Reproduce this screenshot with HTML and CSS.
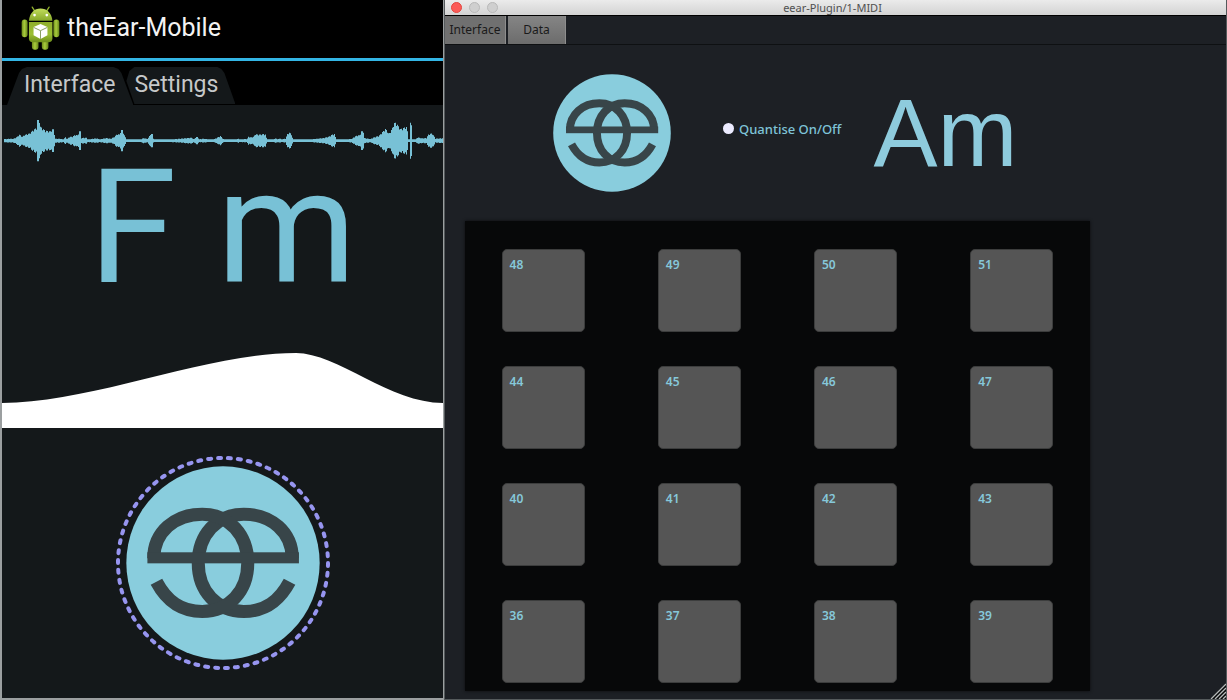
FILE: index.html
```html
<!DOCTYPE html>
<html lang="en">
<head>
<meta charset="utf-8">
<title>theEar</title>
<link rel="stylesheet" href="styles.css">
</head>
<body>
<svg class="defs" aria-hidden="true">
  <symbol id="ear-logo" viewBox="0 0 580 580">
    <circle cx="290" cy="290" r="289" class="logo-disc"/>
    <g class="logo-stroke">
      <g id="ear-half">
        <path d="M497 276C497 198 434 144 352 144C272 144 216 206 216 290C216 374 272 435 352 435C416 435 458 404 489 346"/>
      </g>
      <use href="#ear-half" transform="translate(580 0) scale(-1 1)"/>
    </g>
    <rect x="64" y="258" width="453" height="33" class="logo-bar"/>
  </symbol>
</svg>
<main class="screen">
  <section class="phone">
    <header class="phone-header">
      <svg class="android" viewBox="64 14 118 138" aria-hidden="true">
        <defs>
          <linearGradient id="limb" x1="0" x2="1" y1="0" y2="0">
            <stop offset="0" stop-color="#6d8c1b"/><stop offset=".45" stop-color="#a9cc3d"/><stop offset="1" stop-color="#66851a"/>
          </linearGradient>
          <linearGradient id="torso" x1="0" x2="0" y1="0" y2="1">
            <stop offset="0" stop-color="#8fae2c"/><stop offset=".6" stop-color="#9cbf33"/><stop offset="1" stop-color="#6f8f1c"/>
          </linearGradient>
          <linearGradient id="head" x1="0" x2="0" y1="0" y2="1">
            <stop offset="0" stop-color="#c2dd5c"/><stop offset="1" stop-color="#86a82a"/>
          </linearGradient>
        </defs>
        <path d="M98 20L107 34M149 20L140 34" stroke="#8fae2c" stroke-width="4" stroke-linecap="round"/>
        <path d="M88 61C90 38 104 24 123 24S157 38 159 61Z" fill="url(#head)"/>
        <circle cx="105" cy="44" r="4" fill="#fff"/><circle cx="142" cy="44" r="4" fill="#fff"/>
        <rect x="66" y="57" width="18" height="54" rx="9" fill="url(#limb)"/>
        <rect x="162" y="57" width="18" height="54" rx="9" fill="url(#limb)"/>
        <rect x="97" y="112" width="20" height="37" rx="9" fill="url(#limb)"/>
        <rect x="127" y="112" width="20" height="37" rx="9" fill="url(#limb)"/>
        <path d="M88 65H159V114Q159 126 147 126H100Q88 126 88 114Z" fill="url(#torso)"/>
        <path d="M123 71L144 80V105L123 116L102 105V80Z" fill="#fff"/>
        <path d="M102 81L123 91L144 81M123 91V116" fill="none" stroke="#8a9e62" stroke-width="3"/>
      </svg>
      <h1 class="phone-title">theEar-Mobile</h1>
    </header>
    <nav class="phone-tabs">
      <button class="phone-tab phone-tab-first" type="button">Interface</button>
      <button class="phone-tab phone-tab-second" type="button">Settings</button>
    </nav>
    <svg class="waveform" viewBox="6 0 1323 180" preserveAspectRatio="none" aria-hidden="true">
      <path id="wave"/>
    </svg>
    <p class="phone-chord">F m</p>
    <svg class="hill" viewBox="0 0 441 75" preserveAspectRatio="none" aria-hidden="true">
      <path d="M0 50C90 50 205 0 294 0C335 0 388 50 441 50V75H0Z"/>
    </svg>
    <div class="listen">
      <button class="listen-button" type="button" aria-label="Listen">
        <svg class="listen-ring" viewBox="0 0 214 214" aria-hidden="true">
          <circle cx="107" cy="107" r="105" pathLength="660"/>
        </svg>
        <svg class="listen-logo" aria-hidden="true"><use href="#ear-logo"/></svg>
      </button>
    </div>
  </section>

  <section class="plugin">
    <header class="titlebar">
      <div class="lights">
        <button class="light light-close" type="button" aria-label="Close"></button>
        <button class="light" type="button" aria-label="Minimise"></button>
        <button class="light" type="button" aria-label="Zoom"></button>
      </div>
      <h2 class="window-title">eear-Plugin/1-MIDI</h2>
    </header>
    <nav class="plugin-tabs">
      <button class="plugin-tab plugin-tab-active" type="button">Interface</button>
      <button class="plugin-tab" type="button">Data</button>
    </nav>
    <div class="overview">
      <svg class="plugin-logo" aria-hidden="true"><use href="#ear-logo"/></svg>
      <label class="quantise" for="quantise"><input class="quantise-box" id="quantise" type="checkbox">Quantise On/Off</label>
      <p class="plugin-chord">Am</p>
    </div>
    <div class="pads">
      <button class="pad" type="button">48</button>
      <button class="pad" type="button">49</button>
      <button class="pad" type="button">50</button>
      <button class="pad" type="button">51</button>
      <button class="pad" type="button">44</button>
      <button class="pad" type="button">45</button>
      <button class="pad" type="button">46</button>
      <button class="pad" type="button">47</button>
      <button class="pad" type="button">40</button>
      <button class="pad" type="button">41</button>
      <button class="pad" type="button">42</button>
      <button class="pad" type="button">43</button>
      <button class="pad" type="button">36</button>
      <button class="pad" type="button">37</button>
      <button class="pad" type="button">38</button>
      <button class="pad" type="button">39</button>
    </div>
    <svg class="grip" viewBox="0 0 16 16" aria-hidden="true">
      <path d="M0 16L16 0V16Z" fill="#050607"/>
      <path d="M1 16L16 1M5 16L16 5M9 16L16 9M13 16L16 13" stroke="#b5b8b8" stroke-width="1.4"/>
    </svg>
  </section>
</main>
<script src="waveform.js"></script>
</body>
</html>
```
FILE: styles.css
```css
* {
  box-sizing: border-box;
}

body {
  margin: 0;
  background: #1d2025;
  font-family: "Noto Sans", "Open Sans", sans-serif;
}

button {
  margin: 0;
  padding: 0;
  border: 0;
  background: none;
  color: inherit;
  font: inherit;
}

h1, h2, p {
  margin: 0;
  font-weight: 400;
}

.defs {
  position: absolute;
  width: 0;
  height: 0;
}

.logo-disc {
  fill: #89cddd;
}

.logo-stroke {
  fill: none;
  stroke: #384549;
  stroke-width: 39;
}

.logo-bar {
  fill: #384549;
}

.screen {
  display: grid;
  grid-template-columns: 444fr 783fr;
  min-height: 100vh;
}

/* Mobile app */

.phone {
  display: flex;
  flex-direction: column;
  border: solid #9b9fa0;
  border-width: 0 1px 2px 2px;
  background: #14181a;
  font-family: Roboto, sans-serif;
}

.phone-header {
  display: flex;
  align-items: center;
  gap: 7px;
  height: 61px;
  padding: 0 19px 2px;
  border-bottom: 3px solid #33b5e5;
  background: #000;
}

.android {
  width: 39px;
  height: 46px;
}

.phone-title {
  color: #f3f3f3;
  font-size: 25px;
  line-height: 32px;
}

.phone-tabs {
  display: flex;
  height: 44px;
  padding: 6px 5px 0;
  background: #000;
}

.phone-tab {
  height: 38px;
  padding-bottom: 3px;
  background: #14181a;
  color: #c6c8c9;
  font-size: 23px;
  line-height: 32px;
}

.phone-tab-first {
  padding-left: 17px;
  padding-right: 18px;
  clip-path: polygon(0 100%, 12px 6px, 15px 2px, 20px 0, calc(100% - 20px) 0, calc(100% - 15px) 2px, calc(100% - 12px) 6px, 100% 100%);
}

.phone-tab-second {
  height: 37px;
  padding-bottom: 2px;
  margin-left: -8px;
  padding-left: 9px;
  padding-right: 17px;
  clip-path: polygon(9px 100%, 1px 14px, 4px 4px, 9px 0, calc(100% - 18px) 0, calc(100% - 14px) 2px, calc(100% - 11px) 6px, 100% 100%);
}

.waveform {
  display: block;
  width: 100%;
  height: 60px;
  margin-top: 5px;
  fill: #78c1d6;
}

.phone-chord {
  margin-top: -4px;
  color: #78c1d6;
  font-size: 160px;
  line-height: 124px;
  text-align: center;
}

.hill {
  display: block;
  width: 100%;
  height: 75px;
  margin-top: 63px;
  fill: #fff;
}

.listen {
  display: grid;
  flex: 1;
  place-items: center;
}

.listen-button {
  display: grid;
  place-items: center;
}

.listen-ring,
.listen-logo {
  grid-area: 1 / 1;
}

.listen-ring {
  width: 214px;
  height: 214px;
  fill: none;
  stroke: #9795f0;
  stroke-width: 4;
  stroke-dasharray: 3 7;
  stroke-linecap: round;
}

.listen-logo {
  width: 194px;
  height: 194px;
}

/* Desktop plugin window */

.plugin {
  position: relative;
  display: flex;
  flex-direction: column;
  border: solid #555a5c;
  border-width: 0 1px 1px;
  background: #1d2025;
}

.titlebar {
  display: grid;
  grid-template-columns: 1fr auto 1fr;
  align-items: center;
  height: 16px;
  padding-left: 6px;
  border-bottom: 1px solid #000;
  background: linear-gradient(#ebebeb, #d3d3d3);
}

.lights {
  display: flex;
  gap: 7px;
}

.light {
  width: 11px;
  height: 11px;
  border: 1px solid #b9b9b9;
  border-radius: 50%;
  background: #cfcfcf;
}

.light-close {
  border-color: #e2463f;
  background: #fc5b57;
}

.window-title {
  margin-right: 12px;
  color: #505050;
  font-family: "Noto Sans", sans-serif;
  font-size: 11px;
  line-height: 14px;
}

.plugin-tabs {
  display: flex;
  gap: 2px;
  height: 29px;
  border-bottom: 1px solid #0e1012;
}

.plugin-tab {
  width: 58px;
  border-right: 1px solid #8d8d8d;
  background: linear-gradient(#858585, #6c6c6c);
  color: #1a1a1a;
  font-size: 12px;
  line-height: 16px;
}

.plugin-tab-active {
  width: 61px;
  background: #707070;
}

.overview {
  display: flex;
  align-items: center;
  height: 176px;
  padding-left: 108px;
}

.plugin-logo {
  width: 118px;
  height: 118px;
}

.quantise {
  display: flex;
  align-items: center;
  gap: 5px;
  margin-left: 52px;
  padding-bottom: 9px;
  color: #7fc4d8;
  font-size: 13px;
  font-weight: 500;
  line-height: 16px;
}

.quantise-box {
  width: 11px;
  height: 11px;
  margin: 0;
  border-radius: 50%;
  appearance: none;
  background: #ecebff;
}

.plugin-chord {
  margin-left: 32px;
  color: #8ecbdd;
  font-family: "Liberation Sans", sans-serif;
  font-size: 96px;
  line-height: 112px;
}

.pads {
  display: grid;
  grid-template-columns: repeat(4, 1fr);
  justify-items: center;
  gap: 34px 0;
  width: 80%;
  margin: 0 0 8px 20px;
  padding: 28px 0 8px;
  background: #070809;
  box-shadow: 0 0 3px #0b0c0e;
}

.pad {
  display: flex;
  width: 83px;
  height: 83px;
  padding: 7px;
  border: 1px solid #3c3d3d;
  border-radius: 5px;
  background: #555;
  color: #86c8da;
  font-size: 12px;
  font-weight: 600;
  line-height: 16px;
  text-align: left;
}

.grip {
  position: absolute;
  right: 0;
  bottom: 0;
  width: 16px;
  height: 16px;
}
```
FILE: waveform.js
```js
// Loudness envelope of the clip: [position, half height] pairs.
const envelope = [
  [12,5],[40,6],[48,10],[57,18],[66,12],[72,17],[80,20],[88,22],[96,30],[103,35],[110,40],[111,62],[119,62],[120,42],
  [128,35],[135,30],[150,28],[155,34],[161,34],[163,6],[180,6],[188,4],[195,10],[200,5],[208,12],[216,12],[224,18],
  [232,16],[236,28],[242,28],[243,8],[258,9],[262,4],[290,7],[297,4],[318,8],[330,6],[340,10],[350,20],[358,18],
  [361,32],[367,32],[370,20],[375,10],[376,4],[420,4],[430,8],[440,5],[445,10],[450,20],[456,20],[457,8],[462,4],
  [510,4],[540,6],[560,8],[575,9],[580,4],[587,11],[593,11],[595,4],[610,6],[625,4],[640,4],[650,9],[660,14],
  [665,9],[670,4],[710,3],[712,8],[716,4],[740,5],[744,12],[752,10],[760,12],[765,20],[775,18],[790,20],[796,18],
  [799,4],[820,4],[827,7],[832,4],[838,7],[842,4],[855,6],[862,22],[868,24],[874,18],[877,4],[930,4],[950,6],
  [970,8],[985,12],[995,18],[1003,20],[1006,6],[1010,4],[1040,4],[1055,6],[1060,10],[1070,16],[1078,16],[1083,28],
  [1089,28],[1090,8],[1110,5],[1120,10],[1135,14],[1145,25],[1155,35],[1160,30],[1165,20],[1175,35],[1180,52],
  [1186,54],[1193,45],[1200,35],[1210,38],[1217,42],[1220,40],[1223,4],[1228,4],[1229,54],[1235,54],[1236,4],
  [1245,4],[1252,10],[1265,7],[1278,8],[1285,20],[1295,22],[1300,15],[1305,6],[1320,7],[1328,7]
];

const centre = 92;
const step = 3;
let bars = "";
let i = 0;
for (let x = 12; x < 1328; x += step) {
  while (envelope[i + 1][0] < x) i++;
  const [x0, h0] = envelope[i];
  const [x1, h1] = envelope[i + 1];
  const level = h0 + (h1 - h0) * (x - x0) / (x1 - x0);
  const h = Math.max(4, level * (x % 9 === 0 ? 0.85 : 1));
  bars += `M${x} ${centre - h}h${step}v${2 * h}h${-step}z`;
}
document.getElementById("wave").setAttribute("d", bars);
```
